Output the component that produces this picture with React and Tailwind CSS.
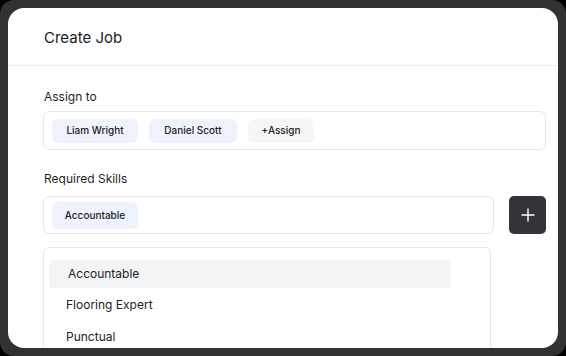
export default function App() {
  const font = { fontFamily: 'Inter, "Noto Sans", sans-serif' };
  return (
    <div className="w-[566px] h-[356px] bg-black" style={font}>
      <div className="w-full h-full rounded-[14px] bg-[#323232] p-2">
        <div className="w-[550px] h-[340px] bg-white rounded-[16px] overflow-hidden flex flex-col">
          <div className="h-[58px] flex items-center pl-[36px] pt-[3px] border-b border-[#ececec] shrink-0">
            <span className="text-[15px] text-[#1a1a1a] font-normal">Create Job</span>
          </div>
          <div className="pl-[35px] pr-[12px] pt-[23px] flex flex-col">
            <div className="text-[12px] leading-4 text-[#1f1f1f] pl-[1px] font-normal">Assign to</div>
            <div className="mt-[6px] h-[39px] border border-[#e6e6e6] rounded-[6px] flex items-center pl-[8px] gap-[11px]">
              <div className="h-[24px] w-[86px] rounded-[6px] bg-[#eef2fc] flex items-center justify-center text-[10px] text-[#222] font-medium">Liam Wright</div>
              <div className="h-[24px] w-[88px] rounded-[6px] bg-[#eef2fc] flex items-center justify-center text-[10px] text-[#222] font-medium">Daniel Scott</div>
              <div className="h-[24px] w-[66px] rounded-[6px] bg-[#f6f6f7] flex items-center justify-center text-[10px] text-[#222] font-medium">+Assign</div>
            </div>
            <div className="mt-[21px] text-[12px] leading-4 text-[#1f1f1f] pl-[1px] font-normal">Required Skills</div>
            <div className="mt-[9px] flex gap-[15px]">
              <div className="w-[451px] h-[38px] border border-[#e6e6e6] rounded-[6px] flex items-center pl-[8px]">
                <div className="h-[27px] w-[86px] rounded-[6px] bg-[#eef2fc] flex items-center justify-center text-[10px] text-[#222] font-medium">Accountable</div>
              </div>
              <button className="w-[37px] h-[38px] rounded-[5px] bg-[#323437] flex items-center justify-center">
                <svg width="14" height="14" viewBox="0 0 14 14" fill="none" stroke="white" strokeWidth="1.4">
                  <path d="M7 0.5v13M0.5 7h13" />
                </svg>
              </button>
            </div>
            <div className="mt-[13px] w-[448px] h-[120px] border border-[#e6e6e6] rounded-[6px] pt-[12px] pl-[5px] flex flex-col">
              <div className="w-[402px] h-[28px] rounded-[4px] bg-[#f3f4f5] flex items-center pl-[19px] text-[12px] text-[#222]">Accountable</div>
              <div className="h-[32px] flex items-center pl-[17px] text-[12px] text-[#222] mt-[1px]">Flooring Expert</div>
              <div className="h-[32px] flex items-center pl-[17px] text-[12px] text-[#222]">Punctual</div>
            </div>
          </div>
        </div>
      </div>
    </div>
  );
}
